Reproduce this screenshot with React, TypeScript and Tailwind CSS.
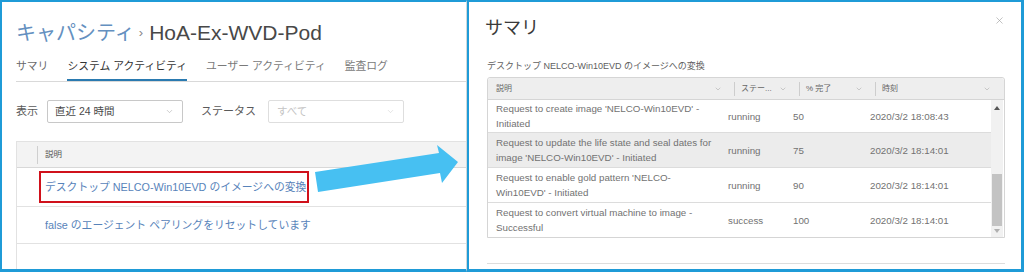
import { ChevronDown, X } from "lucide-react";

function Chev({ c = "#9a9a9a", s = 9 }: { c?: string; s?: number }) {
  return <ChevronDown size={s} strokeWidth={1.5} color={c} />;
}

function LeftPanel() {
  return (
    <div className="flex flex-col w-[467px] h-full shrink-0 border-l-2 border-t-2 border-b-[3px] border-r border-[#1f9bd7] border-r-[#cfd8dc] pl-[14px]">
      <div className="mt-[18px] h-[26px] flex items-center leading-[26px]">
        <span className="text-[20px] text-[#6490c0]">キャパシティ</span>
        <span className="ml-[4px] mr-[6px] text-[13px] text-[#888]">›</span>
        <span className="text-[21px] text-[#484848]">HoA-Ex-WVD-Pod</span>
      </div>
      <div className="mt-[9px] flex gap-[19px] border-b border-[#d9d9d9] text-[10.8px]">
        <div className="h-[26px] leading-[22px] text-[#6a6a6a]">サマリ</div>
        <div className="h-[26px] leading-[22px] text-[#333] border-b-2 border-[#2a7ab0]">システム アクティビティ</div>
        <div className="h-[26px] leading-[22px] text-[#7a7a7a]">ユーザー アクティビティ</div>
        <div className="h-[26px] leading-[22px] text-[#7a7a7a]">監査ログ</div>
      </div>
      <div className="mt-[18px] flex items-center h-[23px] text-[11px]">
        <span className="text-[#5a5a5a]">表示</span>
        <div className="ml-[9px] w-[136px] h-[23px] border border-[#c8c8c8] rounded-[2px] flex items-center justify-between pl-[7px] pr-[8px] text-[10.5px] text-[#4a4a4a]">
          <span>直近 24 時間</span>
          <Chev c="#aaa" />
        </div>
        <span className="ml-[18px] text-[#5a5a5a]">ステータス</span>
        <div className="ml-[12px] w-[136px] h-[23px] border border-[#dedede] rounded-[2px] flex items-center justify-between pl-[8px] pr-[8px] text-[10.5px] text-[#c4c4c4]">
          <span>すべて</span>
          <Chev c="#d0d0d0" />
        </div>
      </div>
      <div className="mt-[18px] flex-1 flex flex-col border-l border-t border-[#e2e2e2]">
        <div className="h-[26px] shrink-0 bg-[#f3f3f3] border-b border-[#d8d8d8] flex items-center">
          <div className="w-[20px]" />
          <div className="w-px h-[18px] bg-[#cfcfcf]" />
          <span className="ml-[7px] text-[8.5px] text-[#555]">説明</span>
        </div>
        <div className="h-[39px] shrink-0 border-b border-[#e2e2e2] flex items-center pl-[22px]">
          <span className="border-2 border-[#d0111b] pl-[4px] pr-[1px] h-[32px] leading-[28px] text-[10.8px] text-[#5783ba]">
            デスクトップ NELCO-Win10EVD のイメージへの変換
          </span>
        </div>
        <div className="h-[37px] shrink-0 border-b border-[#e2e2e2] flex items-center pl-[28px] text-[10.8px] text-[#5783ba]">
          false のエージェント ペアリングをリセットしています
        </div>
      </div>
    </div>
  );
}

const rows = [
  { l: ["Request to create image 'NELCO-Win10EVD' -", "Initiated"], s: "running", p: "50", t: "2020/3/2 18:08:43", h: "h-[33px]", bg: "bg-white", b: true },
  { l: ["Request to update the life state and seal dates for", "image 'NELCO-Win10EVD' - Initiated"], s: "running", p: "75", t: "2020/3/2 18:14:01", h: "h-[35px]", bg: "bg-[#ececec]", b: true },
  { l: ["Request to enable gold pattern 'NELCO-", "Win10EVD' - Initiated"], s: "running", p: "90", t: "2020/3/2 18:14:01", h: "h-[35px]", bg: "bg-white", b: true },
  { l: ["Request to convert virtual machine to image -", "Successful"], s: "success", p: "100", t: "2020/3/2 18:14:01", h: "h-[34px]", bg: "bg-white", b: false },
];

function HeadCell({ w, label, first }: { w: string; label: string; first?: boolean }) {
  return (
    <div className={`${w} h-full flex items-center`}>
      {!first && <div className="w-px h-[14px] bg-[#cdcdcd]" />}
      <span className={`${first ? "pl-[8px]" : "pl-[6px]"} text-[8px] text-[#666]`}>{label}</span>
      <div className="ml-auto pr-[12px] flex items-center">
        <Chev s={8} c="#a0a0a0" />
      </div>
    </div>
  );
}

function RightPanel() {
  return (
    <div className="flex-1 flex flex-col h-full border-l-2 border-t-2 border-r-[3px] border-b-[3px] border-[#1f9bd7] pl-[18px] pr-[16px]">
      <div className="mt-[14px] h-[24px] flex justify-between items-start">
        <span className="-ml-[2px] text-[18px] leading-[24px] text-[#3a3a3a]">サマリ</span>
        <div className="mt-[-1px]">
          <X size={11} strokeWidth={1.3} color="#9a9a9a" />
        </div>
      </div>
      <div className="mt-[20px] text-[9px] leading-[12px] text-[#606060]">
        デスクトップ NELCO-Win10EVD のイメージへの変換
      </div>
      <div className="mt-[5px] border border-[#d5d5d5] rounded-t-[3px] flex flex-col">
        <div className="h-[22px] bg-[#eeeeee] border-b border-[#d5d5d5] flex rounded-t-[3px]">
          <HeadCell w="w-[246px]" label="説明" first />
          <HeadCell w="w-[65px]" label="ステー..." />
          <HeadCell w="w-[76px]" label="% 完了" />
          <HeadCell w="w-[128px]" label="時刻" />
        </div>
        <div className="flex">
          <div className="w-[503px] flex flex-col">
            {rows.map((r, i) => (
              <div key={i} className={`${r.h} ${r.bg} ${r.b ? "border-b border-[#dcdcdc]" : ""} flex items-center text-[9.75px] leading-[15px] text-[#727272]`}>
                <div className="w-[240px] pl-[8px] flex flex-col">
                  <span className="whitespace-nowrap">{r.l[0]}</span>
                  <span className="whitespace-nowrap">{r.l[1]}</span>
                </div>
                <div className="w-[65px]">{r.s}</div>
                <div className="w-[77px]">{r.p}</div>
                <div className="w-[121px] whitespace-nowrap">{r.t}</div>
              </div>
            ))}
          </div>
          <div className="w-[12px] flex flex-col items-center bg-[#f1f1f1]">
            <div className="mt-[6px] w-0 h-0 border-x-[3px] border-x-transparent border-b-[4px] border-b-[#555]" />
            <div className="mt-[64px] w-[10px] h-[52px] bg-[#c3c3c3]" />
            <div className="mt-[3px] w-0 h-0 border-x-[3px] border-x-transparent border-t-[4px] border-t-[#b0b0b0]" />
          </div>
        </div>
      </div>
      <div className="mt-[25px] h-px bg-[#dddddd]" />
    </div>
  );
}

function Arrow() {
  return (
    <svg className="absolute left-0 top-0 pointer-events-none" width="1024" height="272" viewBox="0 0 1024 272">
      <polygon points="315,172 439,153 437,145 458,162 442,183 440,173 318,192" fill="#47c0f2" />
    </svg>
  );
}

export default function App() {
  return (
    <div className="relative flex w-[1024px] h-[272px] bg-white overflow-hidden font-['Liberation_Sans','Noto_Sans_CJK_JP',sans-serif]">
      <LeftPanel />
      <RightPanel />
      <Arrow />
    </div>
  );
}
